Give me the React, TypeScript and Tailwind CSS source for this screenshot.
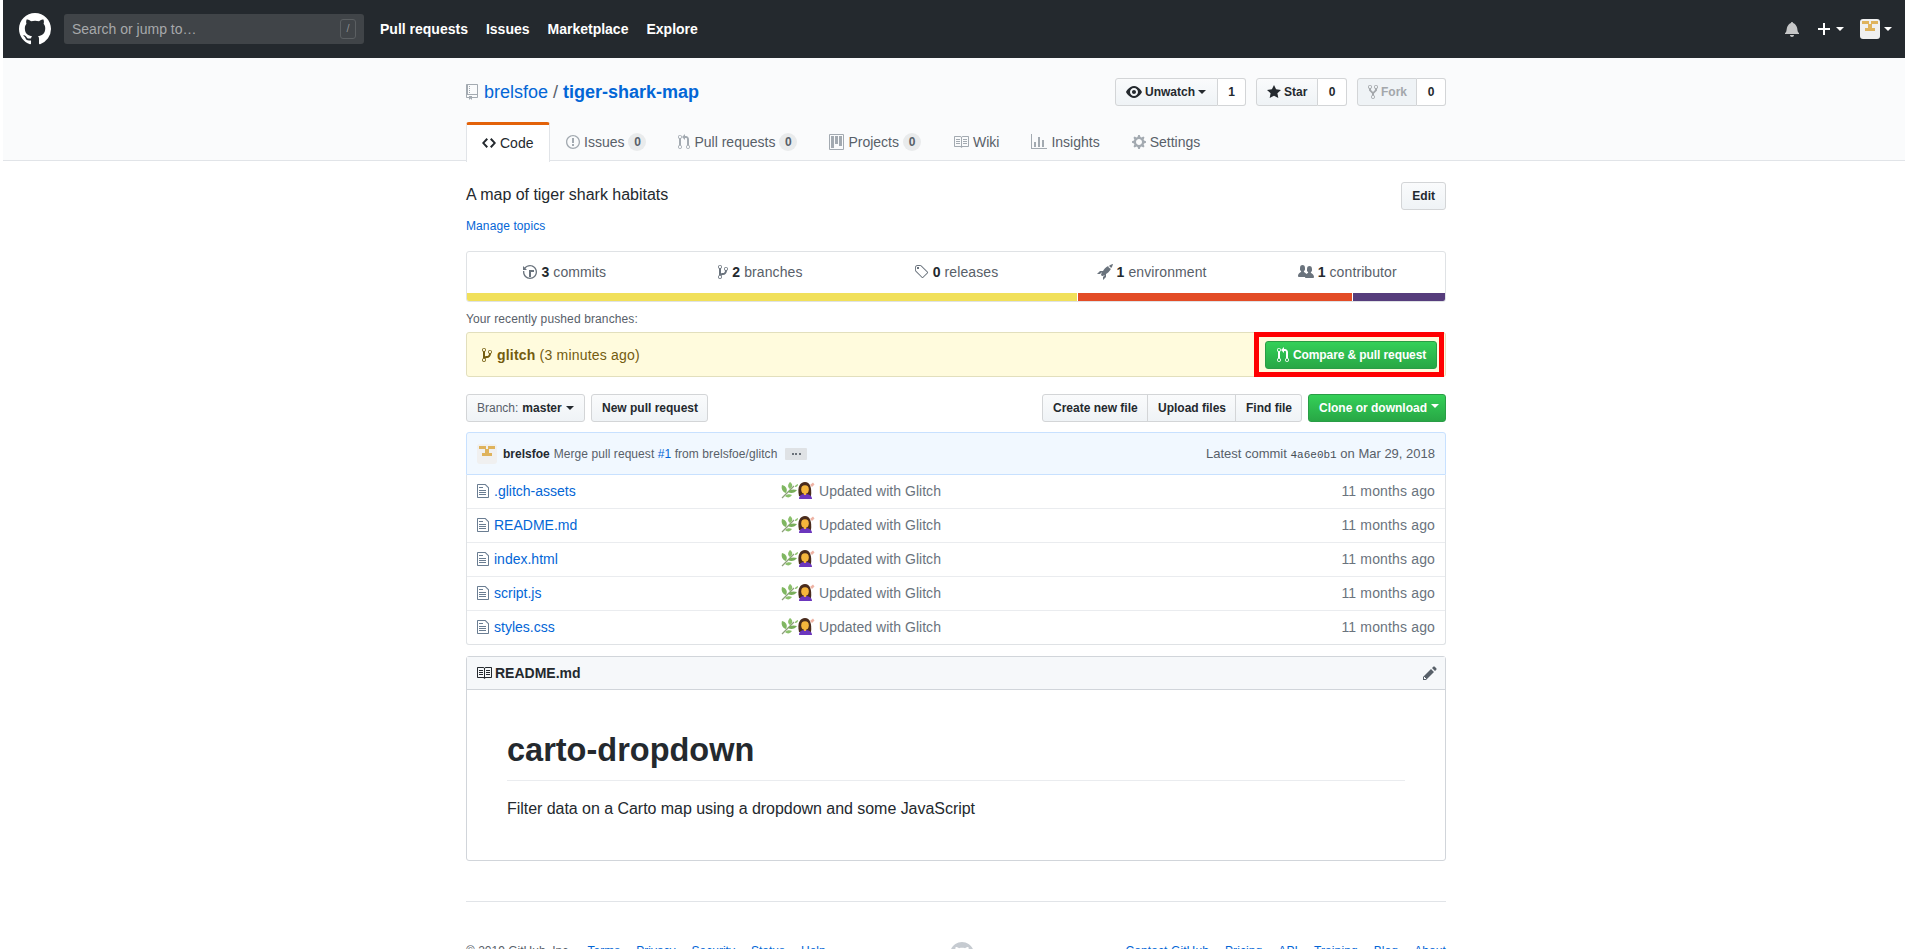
import React from "react";

const P = {
  mark: "M8 0C3.58 0 0 3.58 0 8c0 3.54 2.29 6.53 5.47 7.59.4.07.55-.17.55-.38 0-.19-.01-.82-.01-1.49-2.01.37-2.53-.49-2.69-.94-.09-.23-.48-.94-.82-1.13-.28-.15-.68-.52-.01-.53.63-.01 1.08.58 1.23.82.72 1.21 1.87.87 2.33.66.07-.52.28-.87.51-1.07-1.78-.2-3.64-.89-3.64-3.95 0-.87.31-1.59.82-2.15-.08-.2-.36-1.02.08-2.12 0 0 .67-.21 2.2.82.64-.18 1.32-.27 2-.27.68 0 1.36.09 2 .27 1.53-1.04 2.2-.82 2.2-.82.44 1.1.16 1.92.08 2.12.51.56.82 1.27.82 2.15 0 3.07-1.87 3.75-3.65 3.95.29.25.54.73.54 1.48 0 1.07-.01 1.93-.01 2.2 0 .21.15.46.55.38A8.013 8.013 0 0016 8c0-4.42-3.58-8-8-8z",
  repo: "M4 9H3V8h1v1zm0-3H3v1h1V6zm0-2H3v1h1V4zm0-2H3v1h1V2zm8-1v12c0 .55-.45 1-1 1H6v2l-1.5-1.5L3 16v-2H1c-.55 0-1-.45-1-1V1c0-.55.45-1 1-1h10c.55 0 1 .45 1 1zm-1 10H1v2h2v-1h3v1h5v-2zm0-10H2v9h9V1z",
  code: "M9.5 3L8 4.5 11.5 8 8 11.5 9.5 13 14 8 9.5 3zm-5 0L0 8l4.5 5L6 11.5 2.5 8 6 4.5 4.5 3z",
  issue: "M7 2.3c3.14 0 5.7 2.56 5.7 5.7s-2.56 5.7-5.7 5.7A5.71 5.71 0 011.3 8c0-3.14 2.56-5.7 5.7-5.7zM7 1C3.14 1 0 4.14 0 8s3.14 7 7 7 7-3.14 7-7-3.14-7-7-7zm1 3H6v5h2V4zm0 6H6v2h2v-2z",
  pr: "M11 11.28V5c-.03-.78-.34-1.47-.94-2.06C9.46 2.35 8.78 2.03 8 2H7V0L4 3l3 3V4h1c.27.02.48.11.69.31.21.2.3.42.31.69v6.28A1.993 1.993 0 0010 15a1.993 1.993 0 001-3.72zm-1 2.92c-.66 0-1.2-.55-1.2-1.2 0-.65.55-1.2 1.2-1.2.65 0 1.2.55 1.2 1.2 0 .65-.55 1.2-1.2 1.2zM4 3c0-1.11-.89-2-2-2a1.993 1.993 0 00-1 3.72v6.56A1.993 1.993 0 002 15a1.993 1.993 0 001-3.72V4.72c.59-.34 1-.98 1-1.72zm-.8 10c0 .66-.55 1.2-1.2 1.2-.65 0-1.2-.55-1.2-1.2 0-.65.55-1.2 1.2-1.2.65 0 1.2.55 1.2 1.2zM2 4.2C1.34 4.2.8 3.65.8 3c0-.65.55-1.2 1.2-1.2.65 0 1.2.55 1.2 1.2 0 .65-.55 1.2-1.2 1.2z",
  project: "M10 12h3V2h-3v10zm-4-2h3V2H6v8zm-4 4h3V2H2v12zm-1 1h13V1H1v14zM14 0H1a1 1 0 00-1 1v14a1 1 0 001 1h13a1 1 0 001-1V1a1 1 0 00-1-1z",
  book: "M3 5h4v1H3V5zm0 3h4V7H3v1zm0 2h4V9H3v1zm11-5h-4v1h4V5zm0 2h-4v1h4V7zm0 2h-4v1h4V9zm2-6v9c0 .55-.45 1-1 1H9.5l-1 1-1-1H2c-.55 0-1-.45-1-1V3c0-.55.45-1 1-1h5.5l1 1 1-1H15c.55 0 1 .45 1 1zm-8 .5L7.5 3H2v9h6V3.5zm7-.5H9.5l-.5.5V12h6V3z",
  graph: "M16 14v1H0V0h1v14h15zM5 13H3V8h2v5zm4 0H7V3h2v10zm4 0h-2V6h2v7z",
  gear: "M14 8.77v-1.6l-1.94-.64-.45-1.09.88-1.84-1.13-1.13-1.81.91-1.09-.45-.69-1.92h-1.6l-.63 1.94-1.11.45-1.84-.88-1.13 1.13.91 1.81-.45 1.09L0 7.23v1.59l1.94.64.45 1.09-.88 1.84 1.13 1.13 1.81-.91 1.09.45.69 1.92h1.59l.63-1.94 1.11-.45 1.84.88 1.13-1.13-.92-1.81.47-1.09L14 8.75v.02zM7 11c-1.66 0-3-1.34-3-3s1.34-3 3-3 3 1.34 3 3-1.34 3-3 3z",
  eye: "M8.06 2C3 2 0 8 0 8s3 6 8.06 6C13 14 16 8 16 8s-3-6-7.94-6zM8 12c-2.2 0-4-1.78-4-4 0-2.2 1.8-4 4-4 2.22 0 4 1.8 4 4 0 2.22-1.78 4-4 4zm2-4c0 1.11-.89 2-2 2-1.11 0-2-.89-2-2 0-1.11.89-2 2-2 1.11 0 2 .89 2 2z",
  star: "M14 6l-4.9-.64L7 1 4.9 5.36 0 6l3.6 3.26L2.67 14 7 11.67 11.33 14l-.93-4.74L14 6z",
  fork: "M8 1a1.993 1.993 0 00-1 3.72V6L5 8 3 6V4.72A1.993 1.993 0 002 1a1.993 1.993 0 00-1 3.72V6.5l3 3v1.78A1.993 1.993 0 005 15a1.993 1.993 0 001-3.72V9.5l3-3V4.72A1.993 1.993 0 008 1zM2 4.2C1.34 4.2.8 3.65.8 3c0-.65.55-1.2 1.2-1.2.65 0 1.2.55 1.2 1.2 0 .65-.55 1.2-1.2 1.2zm3 10c-.66 0-1.2-.55-1.2-1.2 0-.65.55-1.2 1.2-1.2.65 0 1.2.55 1.2 1.2 0 .65-.55 1.2-1.2 1.2zm3-10c-.66 0-1.2-.55-1.2-1.2 0-.65.55-1.2 1.2-1.2.65 0 1.2.55 1.2 1.2 0 .65-.55 1.2-1.2 1.2z",
  bell: "M14 12v1H0v-1l.73-.58c.77-.77.81-2.55 1.19-4.42C2.69 3.23 6 2 6 2c0-.55.45-1 1-1s1 .45 1 1c0 0 3.39 1.23 4.16 5 .38 1.88.42 3.66 1.19 4.42l.66.58H14zm-7 4c1.11 0 2-.89 2-2H5c0 1.11.89 2 2 2z",
  plus: "M12 9H7v5H5V9H0V7h5V2h2v5h5v2z",
  history: "M8 13H6V6h5v2H8v5zM7 1C4.81 1 2.87 2.02 1.59 3.59L0 2v4h4L2.5 4.5C3.55 3.17 5.17 2.3 7 2.3c3.14 0 5.7 2.56 5.7 5.7s-2.56 5.7-5.7 5.7A5.71 5.71 0 011.3 8c0-.34.03-.67.09-1H.08C.03 7.33 0 7.66 0 8c0 3.86 3.14 7 7 7s7-3.14 7-7-3.14-7-7-7z",
  branch: "M10 5c0-1.11-.89-2-2-2a1.993 1.993 0 00-1 3.72v.3c-.02.52-.23.98-.63 1.38-.4.4-.86.61-1.38.63-.83.02-1.48.16-2 .45V4.72a1.993 1.993 0 00-1-3.72C.88 1 0 1.89 0 3a2 2 0 001 1.72v6.56c-.59.35-1 .99-1 1.72 0 1.11.89 2 2 2 1.11 0 2-.89 2-2 0-.53-.2-1-.53-1.36.09-.06.48-.41.59-.47.25-.11.56-.17.94-.17 1.05-.05 1.95-.45 2.75-1.25S8.95 7.77 9 6.73h-.02C9.59 6.37 10 5.73 10 5zM2 1.8c.66 0 1.2.55 1.2 1.2 0 .65-.55 1.2-1.2 1.2C1.35 4.2.8 3.65.8 3c0-.65.55-1.2 1.2-1.2zm0 12.41c-.66 0-1.2-.55-1.2-1.2 0-.65.55-1.2 1.2-1.2.65 0 1.2.55 1.2 1.2 0 .65-.55 1.2-1.2 1.2zm6-8c-.66 0-1.2-.55-1.2-1.2 0-.65.55-1.2 1.2-1.2.65 0 1.2.55 1.2 1.2 0 .65-.55 1.2-1.2 1.2z",
  tag: "M7.73 1.73C7.26 1.26 6.62 1 5.96 1H3.5C2.13 1 1 2.13 1 3.5v2.47c0 .66.27 1.3.73 1.77l6.06 6.06c.39.39 1.02.39 1.41 0l4.59-4.59a.996.996 0 000-1.41L7.73 1.73zM2.38 7.09c-.31-.3-.47-.7-.47-1.13V3.5c0-.88.72-1.59 1.59-1.59h2.47c.42 0 .83.16 1.13.47l6.14 6.13-4.73 4.73-6.13-6.15zM3.01 3h2v2H3V3h.01z",
  rocket: "M12.17 3.83c-.27-.27-.47-.55-.63-.88-.16-.31-.27-.66-.34-1.02-.58.33-1.16.7-1.73 1.13-.58.44-1.14.94-1.69 1.48-.7.7-1.33 1.81-1.78 2.45H3L0 10h3l2-2c-.34.77-1.02 2.98-1 3l1 1c.02.02 2.23-.64 3-1l-2 2v3l3-3v-3c.64-.45 1.75-1.09 2.45-1.78.55-.55 1.05-1.13 1.47-1.7.44-.58.81-1.16 1.14-1.72-.36-.08-.7-.19-1.03-.34a3.39 3.39 0 01-.86-.63zM16 0s-.09.38-.3 1.06c-.2.7-.55 1.58-1.06 2.66-.7-.08-1.27-.33-1.66-.7-.39-.38-.63-.94-.7-1.64C13.36.89 14.27.55 14.97.33 15.66.13 16 0 16 0z",
  org: "M16 12.999c0 .439-.45 1-1 1H7.995c-.539 0-.994-.447-.995-.999H1c-.54 0-1-.561-1-1 0-2.634 3-4 3-4s.229-.409 0-1c-.841-.621-1.058-.59-1-3 .058-2.419 1.367-3 2.5-3s2.442.58 2.5 3c.058 2.41-.159 2.379-1 3-.229.59 0 1 0 1s1.549.711 2.42 2.088C9.196 9.369 10 8.999 10 8.999s.229-.409 0-1c-.841-.62-1.058-.59-1-3 .058-2.419 1.367-3 2.5-3s2.437.581 2.495 3c.059 2.41-.158 2.38-1 3-.229.59 0 1 0 1s3.005 1.366 3.005 4z",
  file: "M6 5H2V4h4v1zM2 8h7V7H2v1zm0 2h7V9H2v1zm0 2h7v-1H2v1zm10-7.5V14c0 .55-.45 1-1 1H1c-.55 0-1-.45-1-1V2c0-.55.45-1 1-1h7.5L12 4.5zM11 5L8 2H1v12h10V5z",
  pencil: "M0 12v3h3l8-8-3-3-8 8zm3 2H1v-2h1v1h1v1zm10.3-9.3L12 6 9 3l1.3-1.3a.996.996 0 011.41 0l1.59 1.59c.39.39.39 1.02 0 1.41z",
};

function Oct({ d, w, size = 16, className = "" }: { d: string; w: number; size?: number; className?: string }) {
  return (
    <svg viewBox={`0 0 ${w} 16`} width={(w * size) / 16} height={size} className={`shrink-0 fill-current ${className}`}>
      <path fillRule="evenodd" d={d} />
    </svg>
  );
}

function Caret({ className = "" }: { className?: string }) {
  return <span className={`inline-block w-0 h-0 border-x-4 border-x-transparent border-t-4 border-t-current ${className}`} />;
}

function Identicon({ size }: { size: number }) {
  return (
    <svg viewBox="0 0 20 20" width={size} height={size} className="rounded-[3px] shrink-0">
      <rect width="20" height="20" fill="#f0f0f0" />
      <rect x="2" y="2" width="7" height="3" fill="#dfb35c" />
      <rect x="11" y="2" width="7" height="3" fill="#dfb35c" />
      <rect x="8" y="5" width="4" height="5" fill="#dfb35c" />
      <rect x="5" y="9" width="10" height="3" fill="#dfb35c" />
    </svg>
  );
}

// herb + woman tipping hand, drawn small
function GlitchEmoji() {
  return (
    <svg viewBox="0 0 34 17" width="34" height="17" className="shrink-0">
      <path d="M1 16 L13 4" stroke="#8d9e7c" strokeWidth="1.2" fill="none" />
      <path d="M5 11 C1 10 0 6 1 3 C5 4 7 7 5 11z" fill="#7fb661" />
      <path d="M9 7 C6 5 7 2 9 0 C12 2 12 5 9 7z" fill="#8bc06c" />
      <path d="M7 10 C9 7 13 7 16 8 C14 11 10 12 7 10z" fill="#78ae5a" />
      <path d="M4 14 C6 12 9 12 11 13 C9 16 6 16 4 14z" fill="#8bc06c" />
      <path d="M14 4 C15 3 16 2 17 2 C17 4 16 5 14 5z" fill="#8bc06c" />
      <path d="M18 14 C16 5 19 0 24 0 C29 0 31 6 30 14z" fill="#4a2c1d" />
      <ellipse cx="24" cy="7.5" rx="3.8" ry="4.2" fill="#f5b63c" />
      <path d="M18 17 C18 13 21 12 24 12 C27 12 31 13 31 17z" fill="#6b36bd" />
      <rect x="23" y="10.5" width="2" height="2.5" fill="#f5b63c" />
      <path d="M29 3 L32 0.5 L33.5 2.5 L31 5z" fill="#eeb3a4" />
    </svg>
  );
}

const btn =
  "h-7 inline-flex items-center px-[10px] text-xs font-bold text-[#24292e] border border-[#d3d5d7] bg-linear-to-b from-[#fafbfc] to-[#eff3f6] whitespace-nowrap";
const green =
  "h-7 inline-flex items-center text-xs font-bold text-white border border-[#2a9d46] rounded-[3px] bg-linear-to-b from-[#34d058] to-[#28a745] whitespace-nowrap";
const count =
  "h-7 inline-flex items-center justify-center text-xs font-bold text-[#24292e] bg-white border border-l-0 border-[#d3d5d7] rounded-r-[3px]";

function Counter({ n }: { n: string }) {
  return (
    <span className="ml-1 inline-flex items-center justify-center w-[18px] h-[18px] rounded-full bg-[#e9ebec] text-xs font-bold text-[#586069]">
      {n}
    </span>
  );
}

function Tab({ d, w, label, n }: { d: string; w: number; label: string; n?: string }) {
  return (
    <a className="flex items-center h-[39px] pt-px px-[15px] mx-px text-sm text-[#586069] whitespace-nowrap">
      <Oct d={d} w={w} size={16} className="text-[#a3aab1] mr-1" />
      {label}
      {n && <Counter n={n} />}
    </a>
  );
}

function Stat({ d, w, n, label }: { d: string; w: number; n: string; label: string }) {
  return (
    <div className="flex items-center justify-center gap-[4px] pb-[2px] text-sm tracking-[0.1px] text-[#586069]">
      <Oct d={d} w={w} className="text-[#6a737d]" />
      <span>
        <b className="text-[#24292e]">{n}</b> {label}
      </span>
    </div>
  );
}

const files = [".glitch-assets", "README.md", "index.html", "script.js", "styles.css"];

export default function App() {
  return (
    <div className="h-screen overflow-hidden bg-white pl-[3px] [font-family:'Liberation_Sans',Arial,sans-serif] text-[#24292e] text-sm">
      <header className="h-[58px] bg-[#24292e] flex items-center pl-4 pr-[13px] text-white">
        <Oct d={P.mark} w={16} size={32} />
        <div className="ml-[13px] w-[300px] h-[30px] rounded-[3px] bg-[#404448] flex items-center justify-between pl-2 pr-2">
          <span className="text-sm text-[#a7a9ab]">Search or jump to…</span>
          <span className="w-4 h-5 border border-[#5b5f62] rounded-[3px] text-[11px] text-[#8b8e91] flex items-center justify-center">/</span>
        </div>
        <nav className="ml-4 flex gap-[18px] font-bold">
          <a>Pull requests</a>
          <a>Issues</a>
          <a>Marketplace</a>
          <a>Explore</a>
        </nav>
        <div className="ml-auto flex items-center">
          <Oct d={P.bell} w={14} className="text-[#c5c6c7]" />
          <Oct d={P.plus} w={12} className="ml-[19px]" />
          <Caret className="ml-[6px] text-white" />
          <span className="ml-[16px]"><Identicon size={20} /></span>
          <Caret className="ml-[4px] text-white" />
        </div>
      </header>

      <div className="w-[1906px]">
        <div className="h-[103px] bg-[#fafbfc] border-b border-[#e1e4e8]">
          <div className="w-[980px] mx-auto pt-5">
            <div className="flex items-center justify-between h-7">
              <h1 className="flex items-center text-lg leading-7 text-[#586069]">
                <Oct d={P.repo} w={12} className="text-[#a3aab1]" />
                <a className="ml-[6px] text-[#0366d6]">brelsfoe</a>
                <span className="mx-[5px]">/</span>
                <a className="font-bold text-[#0366d6]">tiger-shark-map</a>
              </h1>
              <div className="flex gap-[10px]">
                <div className="flex">
                  <span className={`${btn} rounded-l-[3px] w-[103px] gap-[3px]`}>
                    <Oct d={P.eye} w={16} /> Unwatch <Caret />
                  </span>
                  <span className={`${count} w-[28px]`}>1</span>
                </div>
                <div className="flex">
                  <span className={`${btn} rounded-l-[3px] w-[62px] gap-[3px]`}>
                    <Oct d={P.star} w={14} /> Star
                  </span>
                  <span className={`${count} w-[29px]`}>0</span>
                </div>
                <div className="flex">
                  <span className={`${btn} rounded-l-[3px] w-[60px] gap-[3px] text-[#a3a7ab] bg-none bg-[#eff3f6]`}>
                    <Oct d={P.fork} w={10} /> Fork
                  </span>
                  <span className={`${count} w-[29px]`}>0</span>
                </div>
              </div>
            </div>
            <div className="flex mt-4">
              <a className="flex items-center h-10 w-[84px] pl-[15px] pb-[2px] bg-white border-x border-t-[3px] border-x-[#e1e4e8] border-t-[#e36209] rounded-t-[3px] text-sm">
                <Oct d={P.code} w={14} className="text-[#24292e] mr-1" /> Code
              </a>
              <Tab d={P.issue} w={14} label="Issues" n="0" />
              <Tab d={P.pr} w={12} label="Pull requests" n="0" />
              <Tab d={P.project} w={15} label="Projects" n="0" />
              <Tab d={P.book} w={16} label="Wiki" />
              <Tab d={P.graph} w={16} label="Insights" />
              <Tab d={P.gear} w={14} label="Settings" />
            </div>
          </div>
        </div>

        <main className="w-[980px] mx-auto">
          <div className="flex items-start justify-between pt-[21px]">
            <p className="text-base leading-6 mt-px tracking-[-0.02px]">A map of tiger shark habitats</p>
            <span className={`${btn} rounded-[3px]`}>Edit</span>
          </div>
          <a className="block mt-[8px] h-4 text-xs leading-4 tracking-[0.1px] text-[#0366d6]">Manage topics</a>

          <div className="mt-[17px] h-[51px] border border-[#dfe2e5] rounded-[3px] flex flex-col overflow-hidden">
            <div className="h-[41px] grid grid-cols-5 items-center">
              <Stat d={P.history} w={14} n="3" label="commits" />
              <Stat d={P.branch} w={10} n="2" label="branches" />
              <Stat d={P.tag} w={15} n="0" label="releases" />
              <Stat d={P.rocket} w={16} n="1" label="environment" />
              <Stat d={P.org} w={16} n="1" label="contributor" />
            </div>
            <div className="h-2 flex gap-px">
              <span className="w-[610px] bg-[#f1e05a]" />
              <span className="w-[274px] bg-[#e34c26]" />
              <span className="flex-1 bg-[#563d7c]" />
            </div>
          </div>

          <p className="mt-[9px] text-xs leading-4 tracking-[0.12px] text-[#586069]">Your recently pushed branches:</p>
          <div className="relative mt-[5px] h-[45px] bg-[#fffbdd] border border-[#e2dfbd] rounded-[3px] flex items-center pl-[15px] pr-2 text-[#735c0f]">
            <Oct d={P.branch} w={10} />
            <span className="ml-[5px] tracking-[0.2px]">
              <b>glitch</b> (3 minutes ago)
            </span>
            <span className={`${green} ml-auto w-[172px] px-[11px] gap-[4px] tracking-[-0.1px]`}>
              <Oct d={P.pr} w={12} /> Compare &amp; pull request
            </span>
            <div className="absolute -top-px right-[1px] -bottom-px w-[190px] border-[5px] border-[#ff0000]" />
          </div>

          <div className="flex items-center justify-between mt-[17px]">
            <div className="flex gap-[6px]">
              <span className={`${btn} rounded-[3px] w-[119px] gap-1 font-normal text-[#586069]`}>
                Branch: <b className="text-[#24292e]">master</b> <Caret className="text-[#24292e]" />
              </span>
              <span className={`${btn} rounded-[3px] w-[117px]`}>New pull request</span>
            </div>
            <div className="flex gap-[6px]">
              <div className="flex">
                <span className={`${btn} rounded-l-[3px] w-[106px]`}>Create new file</span>
                <span className={`${btn} -ml-px w-[89px]`}>Upload files</span>
                <span className={`${btn} -ml-px rounded-r-[3px] w-[67px]`}>Find file</span>
              </div>
              <span className={`${green} w-[138px] px-[10px] gap-1`}>
                Clone or download <Caret className="mb-1" />
              </span>
            </div>
          </div>

          <div className="mt-[10px] h-[43px] bg-[#f1f8ff] border border-[#c8e1ff] rounded-t-[3px] flex items-center pl-[10px] pr-[10px] text-xs text-[#586069]">
            <Identicon size={20} />
            <b className="ml-[6px] text-[#24292e]">brelsfoe</b>
            <span className="ml-1 tracking-[0.07px]">
              Merge pull request <a className="text-[#0366d6]">#1</a> from brelsfoe/glitch
            </span>
            <span className="ml-2 w-[22px] h-3 rounded-[1px] bg-[#dfe2e5] flex items-center justify-center gap-[1.5px]">
              <i className="size-[2px] rounded-full bg-[#444d56]" />
              <i className="size-[2px] rounded-full bg-[#444d56]" />
              <i className="size-[2px] rounded-full bg-[#444d56]" />
            </span>
            <span className="ml-auto text-[13px]">
              Latest commit <span className="[font-family:'Liberation_Mono',monospace] text-[11px] text-[#444d56]">4a6e0b1</span> on Mar 29, 2018
            </span>
          </div>
          <div className="border-x border-b border-[#dfe2e5] rounded-b-[3px]">
            {files.map((f, i) => (
              <div key={f} className={`flex items-center pl-[10px] pr-[10px] pb-[2px] ${i ? "h-[34px] border-t border-[#eaecef]" : "h-[33px]"}`}>
                <Oct d={P.file} w={12} className="text-[#6a7d92]" />
                <a className="ml-[5px] w-[287px] text-[#0366d6]">{f}</a>
                <GlitchEmoji />
                <span className="ml-[4px] tracking-[0.03px] text-[#6a737d]">Updated with Glitch</span>
                <span className="ml-auto tracking-[0.15px] text-[#6a737d]">11 months ago</span>
              </div>
            ))}
          </div>

          <div className="mt-[11px] h-[205px] border border-[#d1d5da] rounded-[3px]">
            <div className="h-[33px] bg-[#f6f8fa] border-b border-[#d1d5da] flex items-center pl-[9px] pr-2">
              <Oct d={P.book} w={16} />
              <b className="ml-[3px]">README.md</b>
              <Oct d={P.pencil} w={14} className="ml-auto text-[#586069]" />
            </div>
            <div className="px-10 pt-[40px]">
              <h2 className="text-[32.5px] leading-10 font-bold pb-[10px] border-b border-[#eaecef]">carto-dropdown</h2>
              <p className="mt-4 text-base leading-6 tracking-[-0.04px]">Filter data on a Carto map using a dropdown and some JavaScript</p>
            </div>
          </div>

          <div className="mt-[40px] border-t border-[#e1e4e8] pt-[41px] flex items-start justify-between text-xs text-[#0366d6]">
            <div className="flex items-center gap-4">
              <span className="text-[#586069]">© 2019 GitHub, Inc.</span>
              <a>Terms</a>
              <a>Privacy</a>
              <a>Security</a>
              <a>Status</a>
              <a>Help</a>
            </div>
            <Oct d={P.mark} w={16} size={24} className="text-[#c6cbd1] -mt-[1px] -ml-[28px]" />
            <div className="flex items-center gap-4 tracking-[0.1px]">
              <a>Contact GitHub</a>
              <a>Pricing</a>
              <a>API</a>
              <a>Training</a>
              <a>Blog</a>
              <a>About</a>
            </div>
          </div>
        </main>
      </div>
    </div>
  );
}
